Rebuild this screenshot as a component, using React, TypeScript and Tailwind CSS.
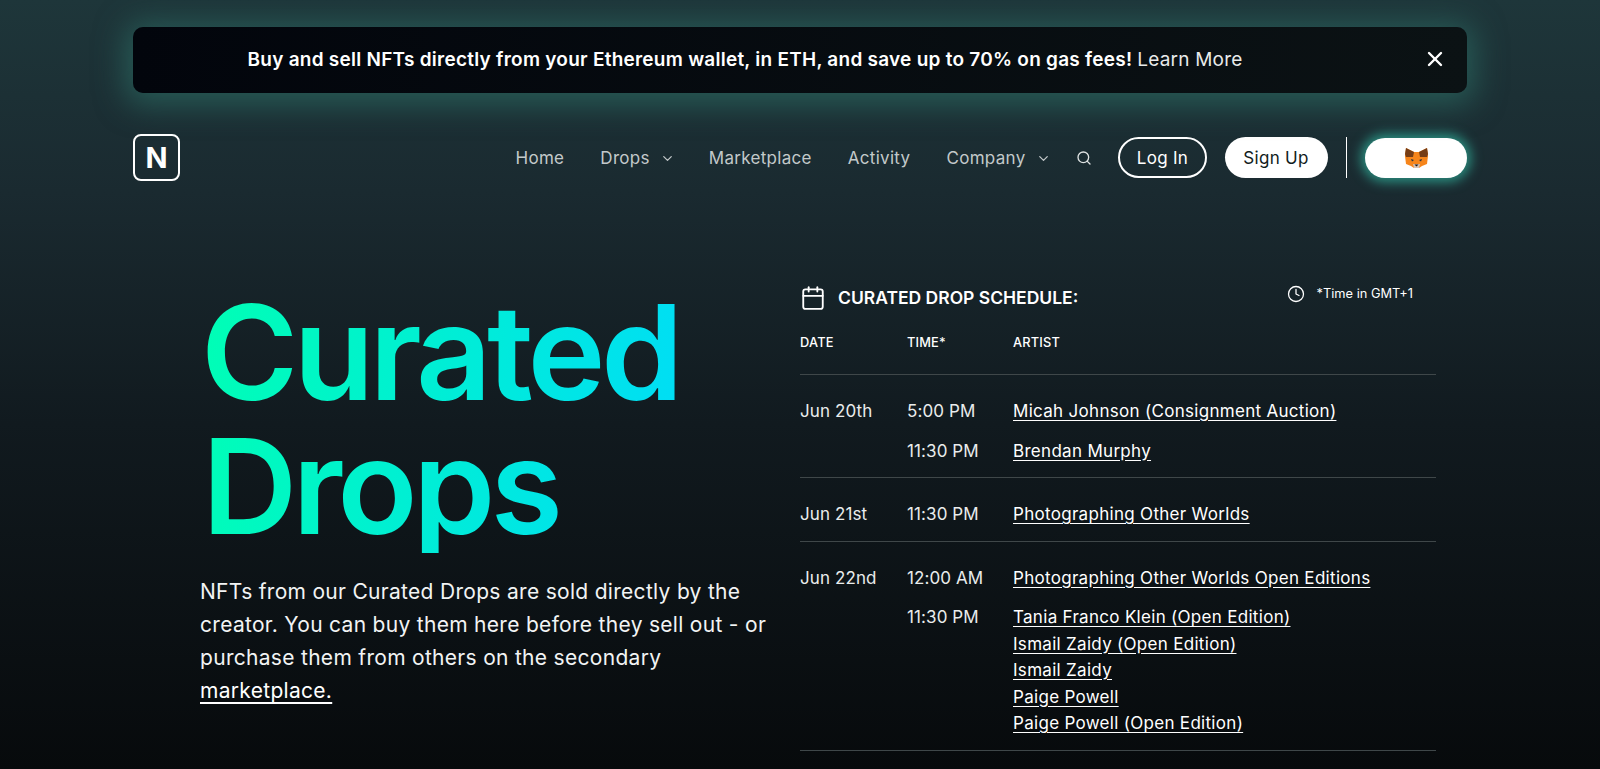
import React from 'react'
import { Calendar, ChevronDown, Clock, Search, X } from 'lucide-react'

function Fox() {
    return (
        <svg width="23" height="20" viewBox="0 0 23 20">
            <polygon points="1,0 9,4 14,4 22,0 23,8 22,16 17,18 14,20 9,20 6,18 1,16 0,8" fill="#f6851b" />
            <polygon points="1,0 9,4 8,9 1,9 0,6" fill="#763d16" />
            <polygon points="22,0 14,4 15,9 22,9 23,6" fill="#763d16" />
            <polygon points="6,11 9,12 7,13.5" fill="#233447" />
            <polygon points="17,11 14,12 16,13.5" fill="#233447" />
            <polygon points="8,16 15,16 14,20 9,20" fill="#d7c1b3" />
            <polygon points="9.5,16.5 13.5,16.5 11.5,18.5" fill="#161616" />
        </svg>
    )
}

function Logo() {
    return (
        <div className='h-[47px] w-[47px] rounded-[8px] border-[2.5px] border-white flex items-center justify-center text-white text-[29px] font-bold leading-none'>
            N
        </div>
    )
}

function Header() {
    const navClass = 'text-[17px] tracking-[0.3px] text-[#c3c9ca] flex items-center'
    return (
        <div className='flex items-center mt-[41px] h-[47px]'>
            <Logo />
            <nav className='ms-auto flex items-center pt-[2px]'>
                <a className={navClass}>Home</a>
                <a className={navClass + ' ms-[36px]'}>Drops<ChevronDown className='ms-[10px] h-[15px] w-[15px]' /></a>
                <a className={navClass + ' ms-[34px]'}>Marketplace</a>
                <a className={navClass + ' ms-[36px]'}>Activity</a>
                <a className={navClass + ' ms-[36px]'}>Company<ChevronDown className='ms-[10px] h-[15px] w-[15px]' /></a>
            </nav>
            <Search className='ms-[25px] h-[16px] w-[16px] text-[#dfe3e3]' />
            <button className='ms-[26px] h-[41px] w-[89px] rounded-full border-2 border-white text-white text-[17px] tracking-[0.3px] pt-[2px] ps-[1px]'>Log In</button>
            <button className='ms-[18px] h-[41px] w-[103px] rounded-full bg-white text-[#111c20] text-[17px] tracking-[0.3px] pt-[2px]'>Sign Up</button>
            <div className='ms-[18px] h-[41px] w-[1.5px] bg-white' />
            <button className='ms-[18px] h-[40px] w-[102px] rounded-full bg-white flex items-center justify-center shadow-[0_0_12px_4px_rgba(47,170,150,0.8)]'>
                <Fox />
            </button>
        </div>
    )
}

function Row({ date, items }: { date: string, items: { time: string, artists: string[] }[] }) {
    return (
        <div className='border-b border-[#3f4749] pt-[23px] pb-[13px] flex flex-col gap-[13px]'>
            {items.map((item, i) => (
                <div key={i} className='grid grid-cols-[107px_106px_1fr] text-[17px] leading-[26.5px] tracking-[0.1px] text-[#e9ecec]'>
                    <div>{i === 0 ? date : ''}</div>
                    <div>{item.time}</div>
                    <div className='flex flex-col text-white tracking-[0.3px]'>
                        {item.artists.map((a) => (
                            <a key={a} className='underline underline-offset-[3px] w-fit'>{a}</a>
                        ))}
                    </div>
                </div>
            ))}
        </div>
    )
}

function Schedule() {
    return (
        <div className='w-[636px] mt-[2px]'>
            <div className='flex items-center text-white h-[30px] ms-[1px]'>
                <Calendar className='h-[26px] w-[26px] -ms-[1px]' strokeWidth={1.7} />
                <span className='ms-[12px] text-[17.5px] font-semibold'>CURATED DROP SCHEDULE:</span>
                <Clock className='ms-auto mb-[8px] h-[18px] w-[18px]' strokeWidth={1.7} />
                <span className='ms-[12px] mb-[8px] me-[23px] text-[12.8px]'>*Time in GMT+1</span>
            </div>
            <div className='grid grid-cols-[107px_106px_1fr] text-[12.8px] font-medium text-white mt-[22px] pb-[23px] border-b border-[#3f4749] leading-[16px] tracking-[0.2px]'>
                <div>DATE</div>
                <div>TIME*</div>
                <div>ARTIST</div>
            </div>
            <Row date='Jun 20th' items={[
                { time: '5:00 PM', artists: ['Micah Johnson (Consignment Auction)'] },
                { time: '11:30 PM', artists: ['Brendan Murphy'] },
            ]} />
            <Row date='Jun 21st' items={[
                { time: '11:30 PM', artists: ['Photographing Other Worlds'] },
            ]} />
            <Row date='Jun 22nd' items={[
                { time: '12:00 AM', artists: ['Photographing Other Worlds Open Editions'] },
                { time: '11:30 PM', artists: ['Tania Franco Klein (Open Edition)', 'Ismail Zaidy (Open Edition)', 'Ismail Zaidy', 'Paige Powell', 'Paige Powell (Open Edition)'] },
            ]} />
        </div>
    )
}

function App() {
    return (
        <div className="h-[769px] overflow-hidden bg-[linear-gradient(180deg,#1e363a_0%,#1a2a30_25%,#111a1f_55%,#070a0c_100%)] font-['Inter',sans-serif]">
            <div className='w-[1334px] mx-auto'>
                <div className='pt-[27px]'>
                    <div className='relative h-[66px] rounded-[10px] bg-[linear-gradient(90deg,#02050c,#0b1214)] flex items-center justify-center shadow-[0_4px_30px_8px_rgba(45,110,102,0.65)] text-[19px] text-white pe-[110px] pt-[1px]'>
                        <span className='font-semibold tracking-[0.25px]'>Buy and sell NFTs directly from your Ethereum wallet, in ETH, and save up to 70% on gas fees!</span>
                        <span className='ms-[5px] tracking-[0.2px] text-[#e8eaea]'>Learn More</span>
                        <X className='absolute right-[20px] top-[20px] h-[24px] w-[24px]' strokeWidth={2.4} />
                    </div>
                </div>
                <Header />
                <div className='flex mt-[100px]'>
                    <div className='ms-[67px] w-[584px] shrink-0'>
                        <h1 className='w-fit ms-[1px] mt-[4px] text-[132px] leading-[134px] font-semibold tracking-[-4.75px] text-transparent bg-clip-text bg-[linear-gradient(100deg,#00ffb4,#00dcf8)]'>
                            Curated<br /><span className='ms-[1px]'>Drops</span>
                        </h1>
                        <p className='mt-[22px] w-[575px] text-[21px] leading-[33px] tracking-[0.3px] text-[#f2f4f4]'>
                            NFTs from our Curated Drops are sold directly by the creator. You can buy them here before they sell out - or purchase them from others on the secondary <a className='underline underline-offset-[4px] text-white'>marketplace.</a>
                        </p>
                    </div>
                    <div className='ms-[16px]'>
                        <Schedule />
                    </div>
                </div>
            </div>
        </div>
    )
}

export default App
